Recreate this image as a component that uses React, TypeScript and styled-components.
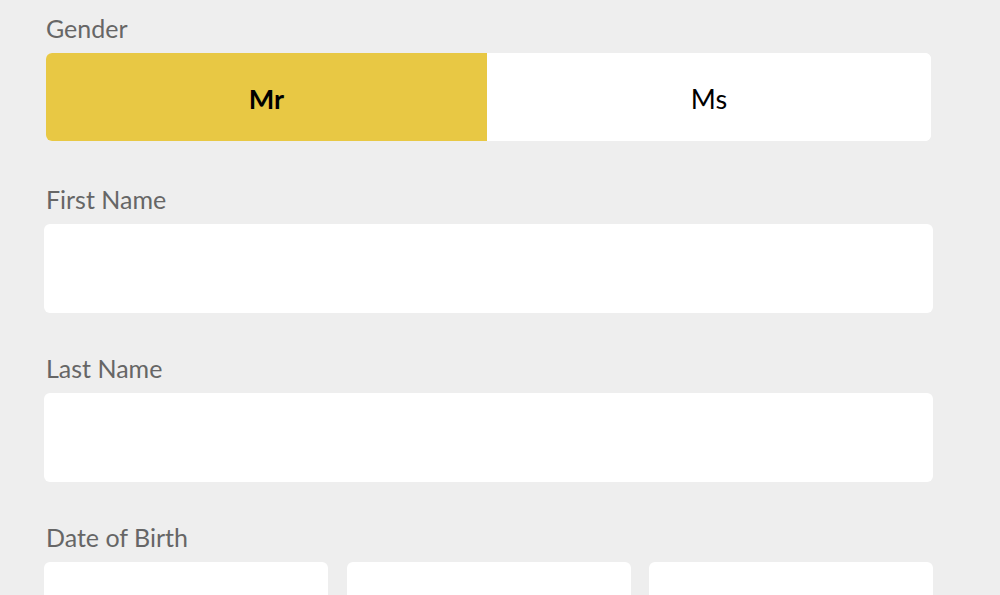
import React, { useState } from 'react';
import styled, { createGlobalStyle } from 'styled-components';

const GlobalStyle = createGlobalStyle`
  html, body {
    margin: 0;
    padding: 0;
    background: #eeeeee;
  }
  body {
    font-family: 'Source Sans Pro', 'Lato', 'Noto Sans', sans-serif;
  }
`;

const Form = styled.form`
  width: 889px;
  padding: 13px 0 0 44px;
  display: flex;
  flex-direction: column;
`;

const Field = styled.div`
  display: flex;
  flex-direction: column;
  margin-bottom: 40px;
`;

const Label = styled.label`
  font-size: 25px;
  line-height: 30px;
  color: #666666;
  padding-left: 2px;
  margin-bottom: 10px;
`;

const Toggle = styled.div`
  display: grid;
  grid-template-columns: 441px 1fr;
  margin: 0 2px 3px;
  height: 88px;
  border-radius: 6px;
  overflow: hidden;
  background: #ffffff;
`;

const ToggleOption = styled.button<{ $active: boolean }>`
  border: none;
  margin: 0;
  padding: 2px 0 0;
  font-family: inherit;
  font-size: 27px;
  font-weight: ${p => (p.$active ? 700 : 400)};
  color: #000000;
  background: ${p => (p.$active ? '#e8c844' : '#ffffff')};
  cursor: pointer;
`;

const Input = styled.input`
  box-sizing: border-box;
  height: 89px;
  width: 100%;
  border: none;
  border-radius: 6px;
  background: #ffffff;
  padding: 0 20px;
  font-family: inherit;
  font-size: 24px;
  outline: none;
`;

const DateRow = styled.div`
  display: grid;
  grid-template-columns: 284px 284px 284px;
  justify-content: space-between;
`;

const App: React.FC = () => {
  const [gender, setGender] = useState<'Mr' | 'Ms'>('Mr');

  return (
    <>
      <GlobalStyle />
      <Form onSubmit={e => e.preventDefault()}>
        <Field>
          <Label>Gender</Label>
          <Toggle>
            {(['Mr', 'Ms'] as const).map(g => (
              <ToggleOption
                key={g}
                type="button"
                $active={gender === g}
                onClick={() => setGender(g)}
              >
                {g}
              </ToggleOption>
            ))}
          </Toggle>
        </Field>
        <Field>
          <Label>First Name</Label>
          <Input type="text" />
        </Field>
        <Field>
          <Label>Last Name</Label>
          <Input type="text" />
        </Field>
        <Field>
          <Label>Date of Birth</Label>
          <DateRow>
            <Input type="text" />
            <Input type="text" />
            <Input type="text" />
          </DateRow>
        </Field>
      </Form>
    </>
  );
};

export default App;
